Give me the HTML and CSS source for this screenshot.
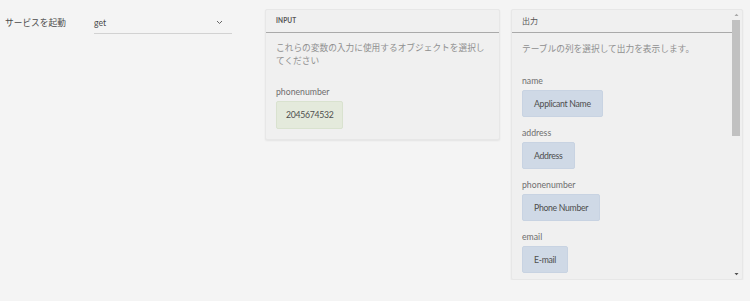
FILE: index.html
```html
<!DOCTYPE html>
<html lang="ja">
<head>
<meta charset="utf-8">
<link rel="stylesheet" href="styles.css">
</head>
<body>
<div class="row">
  <div class="field-label">サービスを起動</div>
  <div class="select">
    <span class="select-value">get</span>
    <svg class="chevron" width="7" height="5" viewBox="0 0 7 5"><path d="M1 1 L3.5 3.5 L6 1" fill="none" stroke="#666" stroke-width="1"/></svg>
  </div>
  <section class="panel panel-input">
    <header class="panel-head head-small">INPUT</header>
    <p class="desc">これらの変数の入力に使用するオブジェクトを選択してください</p>
    <div class="group">
      <div class="group-label">phonenumber</div>
      <div class="chip chip-green">2045674532</div>
    </div>
  </section>
  <section class="panel panel-output">
    <div class="scroll-content">
      <header class="panel-head">出力</header>
      <p class="desc">テーブルの列を選択して出力を表示します。</p>
      <div class="list">
        <div class="group">
          <div class="group-label">name</div>
          <div class="chip chip-blue">Applicant Name</div>
        </div>
        <div class="group">
          <div class="group-label">address</div>
          <div class="chip chip-blue">Address</div>
        </div>
        <div class="group">
          <div class="group-label">phonenumber</div>
          <div class="chip chip-blue">Phone Number</div>
        </div>
        <div class="group">
          <div class="group-label">email</div>
          <div class="chip chip-blue">E-mail</div>
        </div>
      </div>
    </div>
    <div class="scrollbar">
      <svg class="arrow" width="9" height="10" viewBox="0 0 9 10"><path d="M2.5 6 L4.5 3.8 L6.5 6 Z" fill="#a8a8a8"/></svg>
      <div class="track"><div class="thumb"></div></div>
      <svg class="arrow" width="9" height="10" viewBox="0 0 9 10"><path d="M2.5 4 L4.5 6.2 L6.5 4 Z" fill="#505050"/></svg>
    </div>
  </section>
</div>
</body>
</html>
```
FILE: styles.css
```css
html, body {
  margin: 0;
  padding: 0;
  background: #f4f4f4;
}
body {
  font-family: Lato, "Noto Sans CJK JP", sans-serif;
  font-size: 8.7px;
  color: #4b4b4b;
}
.row {
  display: flex;
  align-items: flex-start;
  padding: 9px 0 0 5px;
}
.field-label {
  width: 89px;
  margin-top: 7px;
  line-height: 13px;
  color: #4b4b4b;
}
.select {
  width: 138px;
  margin-top: 7px;
  height: 17px;
  border-bottom: 1px solid #d2d2d2;
  display: flex;
  justify-content: space-between;
  align-items: flex-start;
  line-height: 13px;
  box-sizing: content-box;
}
.select-value {
  color: #4b4b4b;
}
.chevron {
  margin: 4px 9px 0 0;
}
.panel {
  background: #f0f0f0;
  border: 1px solid #e7e7e7;
  border-radius: 2px;
  box-shadow: 0 1px 2px rgba(0,0,0,0.07);
  box-sizing: border-box;
}
.panel-input {
  margin-left: 33px;
  width: 235px;
  padding-bottom: 10px;
}
.panel-output {
  position: relative;
  margin-left: 11px;
  width: 232px;
  height: 271px;
  overflow: hidden;
  display: flex;
}
.scroll-content {
  flex: 1;
  min-width: 0;
}
.panel-head {
  height: 22px;
  line-height: 22px;
  border-bottom: 1px solid #aaaaaa;
  padding-left: 10px;
  color: #555;
  font-size: 8px;
}
.head-small {
  font-size: 6.5px;
  font-weight: 700;
  letter-spacing: 0.1px;
}
.desc {
  margin: 8px 10px 0 10px;
  line-height: 13px;
  color: #8f8f8f;
}
.panel-output .desc {
  margin-top: 9px;
}
.group {
  padding: 0 10px;
}
.panel-input .group {
  margin-top: 19px;
}
.list {
  margin-top: 20px;
  display: flex;
  flex-direction: column;
  gap: 10px;
}
.group-label {
  line-height: 12px;
  color: #6e6e6e;
  margin-bottom: 3px;
}
.chip {
  display: inline-block;
  height: 27px;
  line-height: 25px;
  padding: 0 11px;
  border-radius: 2px;
  box-sizing: border-box;
  color: #4e4e4e;
  letter-spacing: -0.3px;
}
.chip-green {
  background: #e4eadc;
  border: 1px solid #d9e2cf;
  height: 28px;
  line-height: 26px;
  padding: 0 9px;
}
.chip-blue {
  background: #cfd9e6;
  border: 1px solid #c8d3e2;
}
.scrollbar {
  width: 9px;
  margin-right: 1px;
  display: flex;
  flex-direction: column;
  flex: none;
}
.arrow {
  display: block;
  flex: none;
}
.track {
  flex: 1;
}
.thumb {
  width: 8px;
  margin-left: 0;
  height: 116px;
  background: #c1c1c1;
}
```
